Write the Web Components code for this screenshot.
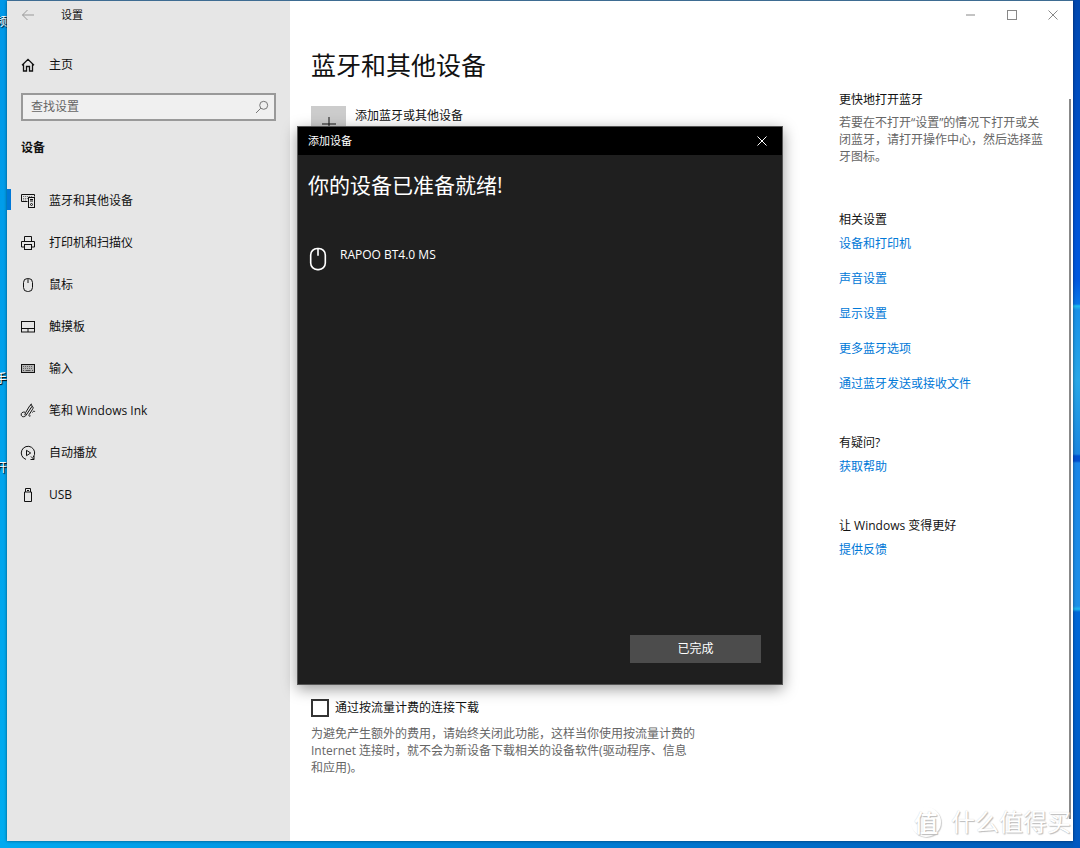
<!DOCTYPE html>
<html lang="zh-CN">
<head>
<meta charset="utf-8">
<title>设置</title>
<style>
html,body{margin:0;min-height:100%}
body{font:12px/20px "Open Sans","Noto Sans CJK SC",sans-serif;color:#111}
</style>
</head>
<body>
<desktop-shell></desktop-shell>
<script>
const define=(name,html,setup)=>customElements.define(name,class extends HTMLElement{
  constructor(){
    super();
    const t=document.createElement('template');
    t.innerHTML=html;
    this.attachShadow({mode:'open'}).append(t.content.cloneNode(true));
  }
  connectedCallback(){ if(setup) setup(this,this.shadowRoot); }
});

const icons={
  back:'<path d="M14 8H2.5M7.5 3L2.5 8l5 5"/>',
  home:'<path stroke-width="1.3" d="M2 8.2L8 2.3l6 5.900M3.500 7v7h3V9.500h3V14h3V7"/>',
  search:'<circle cx="9.700" cy="6.300" r="4"/><path d="M6.800 9.200L2 14"/>',
  devices:'<path d="M7.500 8.500H1.500v-7h13v2"/><path d="M3 3.500h10M3 5.500h5M3 7h4" stroke="#777" stroke-dasharray="1.200 .8"/><rect x="8.500" y="4.500" width="6" height="10"/><path d="M10 6.500h3M10 8h3"/><circle cx="11.500" cy="11.500" r="1"/>',
  printer:'<path d="M4.500 6.500v-5h7v5M4.500 12H1.500V6.500h13V12h-3"/><rect x="4.500" y="9.500" width="7" height="5"/>',
  mouse:'<rect x="3.500" y="1.500" width="9" height="13" rx="4"/><path d="M8 1.500V6"/>',
  touchpad:'<rect x="1.500" y="2.500" width="13" height="10.500"/><path d="M1.500 9.500h13M8 9.500v3.500"/>',
  keyboard:'<rect x="1.500" y="3.500" width="13" height="8" fill="#b4b4b4"/><path stroke="#666" d="M3 5.500h10M3 7.500h10" stroke-dasharray="1 1"/><path stroke="#555" d="M3 9.500h1M5.500 9.500h5M12 9.500h1"/>',
  pen:'<path d="M5 9.200C2.700 8.600.8 10 1.200 12c.5 2.400 3.800 2.200 4.900.2L11.800 3.700c.9-1.400-.9-2.500-1.900-1.200L5.600 9.600 4.800 12.200M10 2.500l2-1.700M12 3.500c1.600.2 1.300 1.600.6 2.700L9.200 11.500c-.7 1.500.4 2.300 1.300 1.300M12.500 9.500c.6-1.500 2.200-1.800 2.300-.5"/>',
  autoplay:'<path d="M6 14.400A6.700 6.700 0 1 1 13.200 12.200M10.500 14.500h3.500v-3.500M11 11.500l2.800 2.800"/><path d="M6.500 5.300v5.400L10.700 8z"/>',
  usb:'<path d="M5.500 5v-3.500h5V5M4.500 5h7v9.500h-7z"/><path d="M7 3.500h2"/>',
  plus:'<path d="M8 1v14M1 8h14"/>',
  min:'<path d="M3 8h9"/>',
  max:'<rect x="3.500" y="3.500" width="9" height="9"/>',
  close:'<path d="M3.500 3.500l9 9M12.500 3.500l-9 9"/>'
};
define('fluent-icon',`<style>:host{display:block;flex:none;width:16px;height:16px}svg{display:block;width:100%;height:100%;fill:none;stroke:currentColor;stroke-width:1}</style><svg viewBox="0 0 16 16" aria-hidden="true"></svg>`,
  (el,r)=>{r.querySelector('svg').innerHTML=icons[el.getAttribute('name')];});

define('nav-item',`<style>
:host{display:block}
a{display:flex;align-items:center;height:42px;color:#111;text-decoration:none}
.bar{width:4px;height:21px;margin:0 9px 4px 0}
:host([current]) .bar{background:#0078d7}
fluent-icon{margin-right:13px}
</style><a href="#"><span class="bar"></span><fluent-icon></fluent-icon><slot></slot></a>`,
  (el,r)=>{const i=r.querySelector('fluent-icon');i.setAttribute('name',el.getAttribute('icon'));i.shadowRoot.querySelector('svg').innerHTML=icons[el.getAttribute('icon')];});

define('search-box',`<style>
:host{display:flex;align-items:center;box-sizing:border-box;height:28px;border:2px solid #999;background:#f0f0f0;padding:0 4px 0 8px}
input{flex:1;min-width:0;border:0;padding:0;background:none;font:inherit;outline:0}
input::placeholder{color:#666;opacity:1}
fluent-icon{color:#777}
</style><input type="text" aria-label="查找设置" placeholder="查找设置"><fluent-icon name="search"></fluent-icon>`);

define('settings-nav',`<style>
:host{display:block;background:#e6e6e6}
header{display:flex;align-items:center;height:28px;padding-left:13px;font-size:11px}
button{border:0;padding:0;background:none;color:#999}
header span{margin-left:25px}
.home{display:block;margin-top:15px}
search-box{margin:7px 14px 0}
h2{margin:17px 14px 22px;font-size:12px;line-height:20px;font-weight:700}
</style>
<header><button aria-label="返回"><fluent-icon name="back"></fluent-icon></button><span>设置</span></header>
<nav-item class="home" icon="home">主页</nav-item>
<search-box></search-box>
<h2>设备</h2>
<nav>
<nav-item icon="devices" current>蓝牙和其他设备</nav-item>
<nav-item icon="printer">打印机和扫描仪</nav-item>
<nav-item icon="mouse">鼠标</nav-item>
<nav-item icon="touchpad">触摸板</nav-item>
<nav-item icon="keyboard">输入</nav-item>
<nav-item icon="pen">笔和 Windows Ink</nav-item>
<nav-item icon="autoplay">自动播放</nav-item>
<nav-item icon="usb">USB</nav-item>
</nav>`);

define('device-page',`<style>
:host{display:block}
h1{margin:0;font-size:25px;line-height:36px;font-weight:400}
.devices{min-height:615px;padding-top:23px;box-sizing:border-box}
.add{display:flex;align-items:flex-start;gap:9px;border:0;padding:0;background:none;font:inherit;color:#111}
.tile{display:grid;place-items:center;width:35px;height:35px;background:#ccc}
label{display:flex;align-items:center;gap:6px;height:20px}
input{appearance:none;box-sizing:border-box;width:18px;height:18px;margin:0;border:2px solid #333;background:#fff}
p{margin:7px 0 0;max-width:386px;line-height:17px;color:#666}
</style>
<h1>蓝牙和其他设备</h1>
<div class="devices"><button class="add"><span class="tile"><fluent-icon name="plus"></fluent-icon></span>添加蓝牙或其他设备</button></div>
<label><input type="checkbox">通过按流量计费的连接下载</label>
<p>为避免产生额外的费用，请始终关闭此功能，这样当你使用按流量计费的 Internet 连接时，就不会为新设备下载相关的设备软件(驱动程序、信息和应用)。</p>`);

define('aside-section',`<style>
:host{display:flex;flex-direction:column;align-items:flex-start;gap:15px;margin-bottom:39px}
h3{margin:0 0 -11px;font-size:12px;line-height:20px;font-weight:400}
::slotted(a){color:#0078d7;text-decoration:none}
::slotted(p){margin:0 0 6px;line-height:17px;color:#666}
</style><h3></h3><slot></slot>`,(el,r)=>{r.querySelector('h3').textContent=el.getAttribute('heading');});

define('related-aside',`<style>:host{display:block}</style>
<aside-section heading="更快地打开蓝牙"><p>若要在不打开“设置”的情况下打开或关闭蓝牙，请打开操作中心，然后选择蓝牙图标。</p></aside-section>
<aside-section heading="相关设置"><a href="#">设备和打印机</a><a href="#">声音设置</a><a href="#">显示设置</a><a href="#">更多蓝牙选项</a><a href="#">通过蓝牙发送或接收文件</a></aside-section>
<aside-section heading="有疑问?"><a href="#">获取帮助</a></aside-section>
<aside-section heading="让 Windows 变得更好"><a href="#">提供反馈</a></aside-section>`);

define('add-device-dialog',`<style>
:host{display:flex;flex-direction:column;box-sizing:border-box;width:486px;min-height:559px;border:1px solid #555;background:#1f1f1f;color:#fff;box-shadow:0 4px 14px rgba(0,0,0,.4)}
header{display:flex;justify-content:space-between;align-items:center;height:28px;padding:0 12px 0 10px;background:#000;font-size:11px}
header button{border:0;padding:0;background:none;color:#fff}
h2{margin:15px 10px 0;font-size:21px;line-height:30px;font-weight:400}
.device{display:flex;align-items:flex-start;gap:9px;margin:45px 0 0 7px}
.device fluent-icon{width:26px;height:26px;margin-top:1px}
footer{display:flex;justify-content:flex-end;margin:auto 21px 21px}
footer button{width:131px;height:28px;border:0;background:#4c4c4c;color:#fff;font:inherit}
</style>
<header><span>添加设备</span><button aria-label="关闭"><fluent-icon name="close"></fluent-icon></button></header>
<h2>你的设备已准备就绪!</h2>
<div class="device"><fluent-icon name="mouse"></fluent-icon><span>RAPOO BT4.0 MS</span></div>
<footer><button>已完成</button></footer>`);

define('settings-window',`<style>
:host{display:grid;grid-template-columns:283px 1fr;position:relative;background:#fff;box-shadow:0 0 3px rgba(0,0,0,.5)}
.body{display:flex;flex-direction:column}
header{display:flex;justify-content:flex-end;align-items:center;gap:25px;height:28px;padding-right:12px}
header button{border:0;padding:0;background:none;color:#888}
main{display:grid;grid-template-columns:1fr 212px;gap:20px;padding:18px 22px 20px 21px}
related-aside{margin-top:43px}
add-device-dialog{position:absolute;top:125px;left:50%;transform:translateX(-50%)}
.scroll{position:absolute;right:2px;top:98px;bottom:22px;width:2px;background:#888}
</style>
<settings-nav></settings-nav>
<div class="body">
<header><button aria-label="最小化"><fluent-icon name="min"></fluent-icon></button><button aria-label="最大化"><fluent-icon name="max"></fluent-icon></button><button aria-label="关闭"><fluent-icon name="close"></fluent-icon></button></header>
<main><device-page></device-page><related-aside></related-aside></main>
</div>
<div class="scroll"></div>
<add-device-dialog></add-device-dialog>`);

define('site-watermark',`<style>
:host{display:flex;align-items:center;gap:10px;color:#fff;font-size:24px;line-height:32px;text-shadow:1px 1px 1px #bbb,0 0 1px #ccc}
.seal{display:grid;place-items:center;box-sizing:border-box;width:30px;height:30px;border-radius:50%;box-shadow:1px 1px 1px #ccc;font-weight:500}
</style><span class="seal">值</span><span>什么值得买</span>`);

define('desktop-shell',`<style>
:host{display:grid;position:relative;box-sizing:border-box;min-height:100vh;padding:1px 7px 7px;overflow:hidden;
background:linear-gradient(#0048b0,#0058e0 280px,#0878e8 304px,#20c0f0 306px,#1a90e8 310px,#28a8e8 380px,#1a86e0 454px,#0050d0 456px,#0050d0 461px,#1a86e8 463px,#1e90e8 606px,#20b8f0 609px,#0068d8 612px,#0058c0) right/7px 100% no-repeat,
linear-gradient(90deg,#00aaf0,#0078d0 60%,#0058b8) bottom/100% 7px no-repeat,
linear-gradient(#0098e8,#00adf0) left/7px 100% no-repeat,#4d86b5}
.label{position:absolute;right:calc(100% - 7px);color:#fff;text-shadow:1px 1px 1px #000;white-space:nowrap}
.a{top:12px}.b{top:369px}.c{top:458px}
site-watermark{position:absolute;right:9px;bottom:10px}
</style>
<span class="label a">频</span><span class="label b">手</span><span class="label c">开</span>
<settings-window></settings-window>
<site-watermark></site-watermark>`);
</script>
</body>
</html>
